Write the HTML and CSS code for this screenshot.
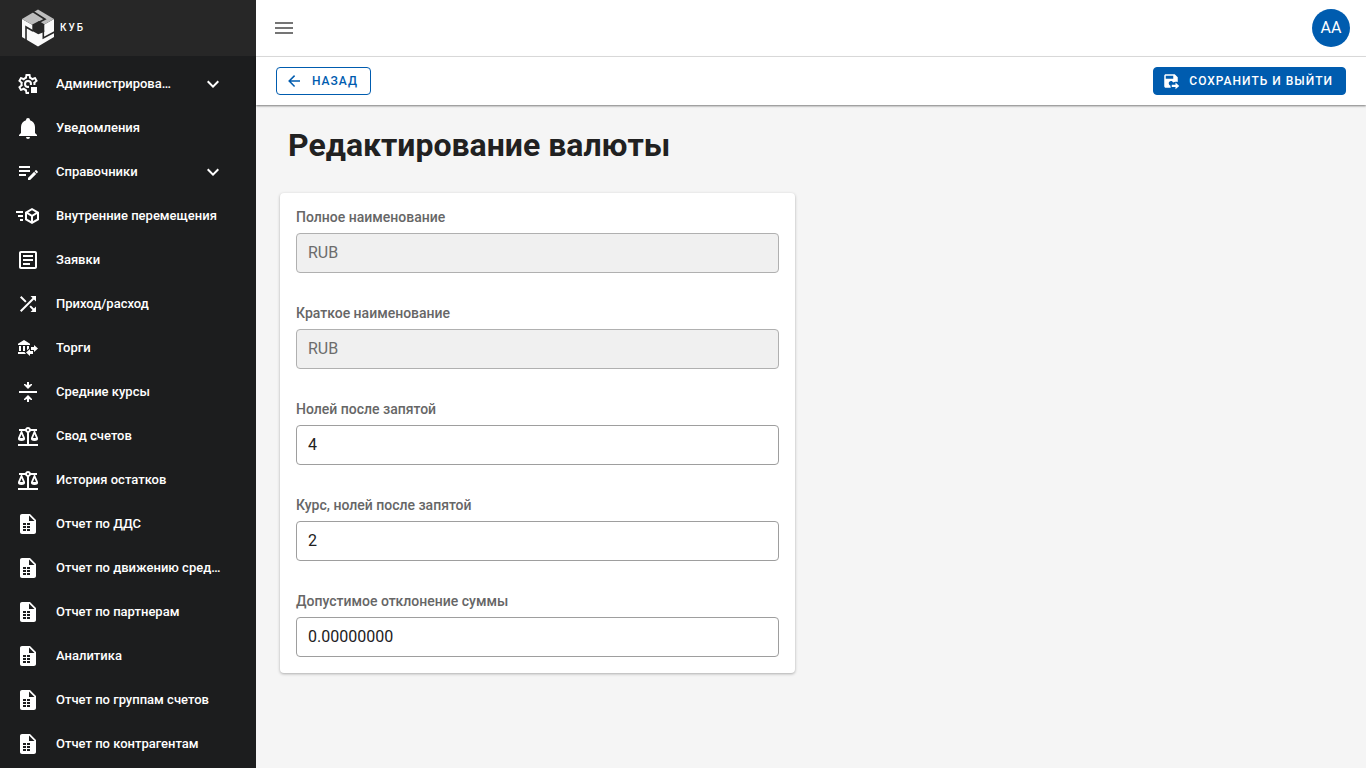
FILE: index.html
```
<!DOCTYPE html>
<html lang="ru">
<head>
<meta charset="utf-8">
<title>Редактирование валюты</title>
<link rel="stylesheet" href="styles.css">
</head>
<body>
<svg class="sprite" aria-hidden="true">
  <symbol id="cog" viewBox="0 0 24 24">
    <mask id="cog-cut"><rect width="24" height="24" fill="#fff"/><rect x="13" y="13" width="11" height="11" fill="#000"/></mask>
    <path mask="url(#cog-cut)" d="M12,8A4,4 0 0,1 16,12A4,4 0 0,1 12,16A4,4 0 0,1 8,12A4,4 0 0,1 12,8M12,10A2,2 0 0,0 10,12A2,2 0 0,0 12,14A2,2 0 0,0 14,12A2,2 0 0,0 12,10M10,22C9.75,22 9.54,21.82 9.5,21.58L9.13,18.93C8.5,18.68 7.96,18.34 7.44,17.94L4.95,18.95C4.73,19.03 4.46,18.95 4.34,18.73L2.34,15.27C2.21,15.05 2.27,14.78 2.46,14.63L4.57,12.97L4.5,12L4.57,11L2.46,9.37C2.27,9.22 2.21,8.95 2.34,8.73L4.34,5.27C4.46,5.05 4.73,4.96 4.95,5.05L7.44,6.05C7.96,5.66 8.5,5.32 9.13,5.07L9.5,2.42C9.54,2.18 9.75,2 10,2H14C14.25,2 14.46,2.18 14.5,2.42L14.87,5.07C15.5,5.32 16.04,5.66 16.56,6.05L19.05,5.05C19.27,4.96 19.54,5.05 19.66,5.27L21.66,8.73C21.79,8.95 21.73,9.22 21.54,9.37L19.43,11L19.5,12L19.43,13L21.54,14.63C21.73,14.78 21.79,15.05 21.66,15.27L19.66,18.73C19.54,18.95 19.27,19.04 19.05,18.95L16.56,17.95C16.04,18.34 15.5,18.68 14.87,18.93L14.5,21.58C14.46,21.82 14.25,22 14,22H10M11.25,4L10.88,6.61C9.68,6.86 8.62,7.5 7.85,8.39L5.44,7.35L4.69,8.65L6.8,10.2C6.4,11.37 6.4,12.64 6.8,13.8L4.68,15.36L5.43,16.66L7.86,15.62C8.63,16.5 9.68,17.14 10.87,17.38L11.24,20H12.76L13.13,17.39C14.32,17.14 15.37,16.5 16.14,15.62L18.57,16.66L19.32,15.36L17.2,13.81C17.6,12.64 17.6,11.37 17.2,10.2L19.31,8.65L18.56,7.35L16.15,8.39C15.38,7.5 14.32,6.86 13.12,6.62L12.75,4H11.25Z"/>
    <path d="M15,15H21V21H15Z"/>
  </symbol>
  <symbol id="bell" viewBox="0 0 24 24"><path d="M21,19V20H3V19L5,17V11C5,7.9 7.03,5.17 10,4.29C10,4.19 10,4.1 10,4A2,2 0 0,1 12,2A2,2 0 0,1 14,4C14,4.1 14,4.19 14,4.29C16.97,5.17 19,7.9 19,11V17L21,19M14,21A2,2 0 0,1 12,23A2,2 0 0,1 10,21"/></symbol>
  <symbol id="edit" viewBox="0 0 24 24"><path d="M3,6V8H14V6H3M3,10V12H14V10H3M20,10.1C19.9,10.1 19.7,10.2 19.6,10.3L18.6,11.3L20.7,13.4L21.7,12.4C21.9,12.2 21.9,11.8 21.7,11.6L20.4,10.3C20.3,10.2 20.2,10.1 20,10.1M18.1,11.8L12,17.9V20H14.1L20.2,13.9L18.1,11.8M3,14V16H10V14H3Z"/></symbol>
  <symbol id="cube" viewBox="0 0 24 24"><path d="M16,4L9,8.04V15.96L16,20L23,15.96V8.04M16,6.31L19.8,8.5L16,10.69L12.21,8.5M0,7V9H7V7M11,10.11L15,12.42V17.11L11,14.81M21,10.11V14.81L17,17.11V12.42M2,11V13H7V11M4,15V17H7V15"/></symbol>
  <symbol id="text" viewBox="0 0 24 24"><path d="M5,3C3.89,3 3,3.89 3,5V19C3,20.11 3.89,21 5,21H19C20.11,21 21,20.11 21,19V5C21,3.89 20.11,3 19,3H5M5,5H19V19H5V5M7,7V9H17V7H7M7,11V13H17V11H7M7,15V17H14V15H7Z"/></symbol>
  <symbol id="shuffle" viewBox="0 0 24 24"><path d="M14.83,13.41L13.42,14.82L16.55,17.95L14.5,20H20V14.5L17.96,16.54L14.83,13.41M14.5,4L16.54,6.04L4,18.59L5.41,20L17.96,7.46L20,9.5V4M10.59,9.17L5.41,4L4,5.41L9.17,10.58L10.59,9.17Z"/></symbol>
  <symbol id="bank" viewBox="0 0 24 24"><path d="M15,14V11H18V9L22,12.5L18,16V14H15M14,7.7V9H2V7.7L8,4L14,7.7M7,10H9V15H7V10M3,10H5V15H3V10M13,10V12.5L11,14.3V10H13M9.1,16L8.5,16.5L10.2,18H2V16H9.1M17,15V18H14V20L10,16.5L14,13V15H17Z"/></symbol>
  <symbol id="collapse" viewBox="0 0 24 24"><path d="M3,11H21V13H3V11M11,2H13V5L15,4H16V5L12,9L8,5V4H9L11,5V2M11,22V19L9,20H8V19L12,15L16,19V20H15L13,19V22H11Z"/></symbol>
  <symbol id="scale" viewBox="0 0 24 24"><path d="M12,3C10.73,3 9.6,3.8 9.18,5H3V7H4.95L2,14C1.53,16 3,17 5.5,17C8,17 9.56,16 9,14L6.05,7H9.17C9.5,7.85 10.15,8.5 11,8.83V20H2V22H22V20H13V8.82C13.85,8.5 14.5,7.85 14.82,7H17.95L15,14C14.53,16 16,17 18.5,17C21,17 22.56,16 22,14L19.05,7H21V5H14.83C14.4,3.8 13.27,3 12,3M12,5A1,1 0 0,1 13,6A1,1 0 0,1 12,7A1,1 0 0,1 11,6A1,1 0 0,1 12,5M5.5,10.25L7,14H4L5.5,10.25M18.5,10.25L20,14H17L18.5,10.25Z"/></symbol>
  <symbol id="file" viewBox="0 0 24 24"><path fill-rule="evenodd" d="M14,2H6C4.89,2 4,2.89 4,4V20C4,21.11 4.89,22 6,22H18C19.11,22 20,21.11 20,20V8L14,2M13,3.5L18.5,9H13V3.5M7,11H10V13H7V11M11,11H14V13H11V11M7,14H10V16H7V14M11,14H14V16H11V14M7,17H10V19H7V17M11,17H14V19H11V17Z"/></symbol>
  <symbol id="chevron" viewBox="0 0 24 24"><path d="M7.41,8.58L12,13.17L16.59,8.58L18,10L12,16L6,10L7.41,8.58Z"/></symbol>
  <symbol id="menu" viewBox="0 0 24 24"><path d="M3,6H21V8H3V6M3,11H21V13H3V11M3,16H21V18H3V16Z"/></symbol>
  <symbol id="back" viewBox="0 0 24 24"><path d="M20,11V13H8L13.5,18.5L12.08,19.92L4.16,12L12.08,4.08L13.5,5.5L8,11H20Z"/></symbol>
  <symbol id="save" viewBox="0 0 24 24"><path d="M17,3H5C3.9,3 3,3.9 3,5V19C3,20.1 3.9,21 5,21H11.8C11.4,20.1 11.2,19.2 11.2,18C10,17.6 9,16.4 9,15C9,13.3 10.3,12 12,12C13.3,12 14.4,12.8 14.8,14C16,13.2 17.5,12.8 19,13C19.7,13 20.4,13.1 21,13.3V7L17,3M15,9H5V5H15V9M13,17H18V14L23,18.5L18,23V20H13V17Z"/></symbol>
</svg>
<div class="app">
  <aside class="sidebar">
    <a class="brand" href="#">
      <svg class="brand-mark" viewBox="0 0 34 38" aria-hidden="true">
        <path fill="#fafafa" d="M1,10L17,19L33,10V28L17,37.5L1,28Z"/>
        <path fill="#bdbdbd" d="M17,0.5L33,10L17,19L1,10Z"/>
        <path fill="#272727" d="M11.3,15.4L18,12L23.3,15.2V23L17.3,25.3L11.3,22Z"/>
        <path fill="none" stroke="#272727" stroke-width="1.6" d="M11,2L24,10.2L17.5,13.5M5,31.5V18L12,22M22.3,21V29L33.5,23"/>
      </svg>
      <span class="brand-name">КУБ</span>
    </a>
    <nav class="nav">
      <button class="nav-item" type="button"><svg class="icon"><use href="#cog"/></svg><span class="nav-text">Администрирование</span><svg class="icon chevron"><use href="#chevron"/></svg></button>
      <a class="nav-item" href="#"><svg class="icon"><use href="#bell"/></svg><span class="nav-text">Уведомления</span></a>
      <button class="nav-item" type="button"><svg class="icon"><use href="#edit"/></svg><span class="nav-text">Справочники</span><svg class="icon chevron"><use href="#chevron"/></svg></button>
      <a class="nav-item" href="#"><svg class="icon"><use href="#cube"/></svg><span class="nav-text">Внутренние перемещения</span></a>
      <a class="nav-item" href="#"><svg class="icon"><use href="#text"/></svg><span class="nav-text">Заявки</span></a>
      <a class="nav-item" href="#"><svg class="icon"><use href="#shuffle"/></svg><span class="nav-text">Приход/расход</span></a>
      <a class="nav-item" href="#"><svg class="icon"><use href="#bank"/></svg><span class="nav-text">Торги</span></a>
      <a class="nav-item" href="#"><svg class="icon"><use href="#collapse"/></svg><span class="nav-text">Средние курсы</span></a>
      <a class="nav-item" href="#"><svg class="icon"><use href="#scale"/></svg><span class="nav-text">Свод счетов</span></a>
      <a class="nav-item" href="#"><svg class="icon"><use href="#scale"/></svg><span class="nav-text">История остатков</span></a>
      <a class="nav-item" href="#"><svg class="icon"><use href="#file"/></svg><span class="nav-text">Отчет по ДДС</span></a>
      <a class="nav-item" href="#"><svg class="icon"><use href="#file"/></svg><span class="nav-text">Отчет по движению средств</span></a>
      <a class="nav-item" href="#"><svg class="icon"><use href="#file"/></svg><span class="nav-text">Отчет по партнерам</span></a>
      <a class="nav-item" href="#"><svg class="icon"><use href="#file"/></svg><span class="nav-text">Аналитика</span></a>
      <a class="nav-item" href="#"><svg class="icon"><use href="#file"/></svg><span class="nav-text">Отчет по группам счетов</span></a>
      <a class="nav-item" href="#"><svg class="icon"><use href="#file"/></svg><span class="nav-text">Отчет по контрагентам</span></a>
    </nav>
  </aside>
  <div class="content">
    <header class="topbar">
      <button class="menu-button" type="button" aria-label="Меню"><svg class="icon"><use href="#menu"/></svg></button>
      <button class="avatar" type="button">AA</button>
    </header>
    <div class="actions">
      <a class="btn btn-outlined" href="#"><svg class="icon icon-small"><use href="#back"/></svg>Назад</a>
      <button class="btn btn-primary" type="submit" form="currency"><svg class="icon icon-small"><use href="#save"/></svg>Сохранить и выйти</button>
    </div>
    <main class="page">
      <h1 class="title">Редактирование валюты</h1>
      <div class="columns">
        <form class="card" id="currency">
          <div class="field"><label for="full-name">Полное наименование</label><input id="full-name" type="text" value="RUB" disabled></div>
          <div class="field"><label for="short-name">Краткое наименование</label><input id="short-name" type="text" value="RUB" disabled></div>
          <div class="field"><label for="digits">Нолей после запятой</label><input id="digits" type="text" value="4"></div>
          <div class="field"><label for="rate-digits">Курс, нолей после запятой</label><input id="rate-digits" type="text" value="2"></div>
          <div class="field"><label for="deviation">Допустимое отклонение суммы</label><input id="deviation" type="text" value="0.00000000"></div>
        </form>
      </div>
    </main>
  </div>
</div>
</body>
</html>
```
FILE: styles.css
```
* {
  box-sizing: border-box;
}

body {
  margin: 0;
  font-family: Roboto, "Noto Sans", sans-serif;
  font-size: 16px;
  line-height: 24px;
  color: #212121;
  background: #f5f5f5;
}

button,
input {
  font: inherit;
}

button {
  border: 0;
  background: none;
  cursor: pointer;
}

a {
  text-decoration: none;
}

.sprite {
  position: absolute;
  width: 0;
  height: 0;
}

.icon {
  flex: none;
  width: 24px;
  height: 24px;
  fill: currentColor;
}

.icon-small {
  width: 18px;
  height: 18px;
}

.app {
  display: flex;
  height: 100vh;
}

.sidebar {
  display: flex;
  flex: none;
  flex-direction: column;
  width: 256px;
  color: #fff;
  background: #1c1d1e;
}

.brand {
  display: flex;
  flex: none;
  align-items: center;
  gap: 5px;
  height: 56px;
  padding: 0 21px;
  color: #fff;
  background: #272727;
}

.brand-mark {
  width: 34px;
  height: 38px;
}

.brand-name {
  font-size: 10px;
  font-weight: 500;
  letter-spacing: 2px;
}

.nav {
  display: flex;
  flex: 1;
  flex-direction: column;
  gap: 4px;
  min-height: 0;
  padding: 8px;
  overflow: hidden;
}

.nav-item {
  display: flex;
  flex: none;
  align-items: center;
  gap: 16px;
  height: 40px;
  padding: 0 23px 0 8px;
  font-size: 13px;
  font-weight: 500;
  line-height: 16px;
  color: #fff;
  text-align: left;
}

.nav-text {
  flex: 1;
  min-width: 0;
  overflow: hidden;
  text-overflow: ellipsis;
  white-space: nowrap;
}

.chevron {
  margin-left: 12px;
}

.content {
  display: flex;
  flex: 1;
  flex-direction: column;
  min-width: 0;
}

.topbar {
  display: flex;
  align-items: center;
  justify-content: space-between;
  height: 57px;
  padding: 0 16px;
  border-bottom: 1px solid #e0e0e0;
  background: #fff;
}

.menu-button {
  display: flex;
  padding: 0;
  color: #757575;
}

.avatar {
  width: 38px;
  height: 38px;
  padding: 0;
  border-radius: 50%;
  color: #fff;
  background: #005caf;
}

.actions {
  display: flex;
  align-items: center;
  justify-content: space-between;
  height: 48px;
  padding: 0 20px;
  background: #fff;
  box-shadow: 0 1px 2px rgba(0, 0, 0, 0.5);
}

.btn {
  display: inline-flex;
  align-items: center;
  gap: 9px;
  height: 28px;
  padding: 0 12px 0 8px;
  border: 1px solid #005caf;
  border-radius: 4px;
  font-size: 12px;
  font-weight: 500;
  letter-spacing: 1px;
  text-transform: uppercase;
}

.btn-outlined {
  color: #005caf;
}

.btn-primary {
  color: #fff;
  background: #005caf;
}

.page {
  flex: 1;
  padding: 16px 32px 24px 24px;
}

.title {
  margin: 0 0 24px;
  padding: 0 8px;
  font-size: 32px;
  font-weight: 700;
  line-height: 48px;
}

.columns {
  display: grid;
  grid-template-columns: 1fr 1fr;
  gap: 24px;
}

.card {
  display: flex;
  flex-direction: column;
  gap: 32px;
  padding: 16px;
  border-radius: 4px;
  background: #fff;
  box-shadow: 0 1px 3px rgba(0, 0, 0, 0.3);
}

.field {
  display: flex;
  flex-direction: column;
  gap: 8px;
}

.field label {
  font-size: 14px;
  font-weight: 500;
  line-height: 16px;
  color: #666;
}

.field input {
  width: 100%;
  height: 40px;
  padding: 0 11px 2px;
  border: 1px solid #9e9e9e;
  border-radius: 4px;
  color: #212121;
  background: #fff;
}

.field input:disabled {
  border-color: #b0b0b0;
  color: #6c6c6c;
  background: #f0f0f0;
}
```
